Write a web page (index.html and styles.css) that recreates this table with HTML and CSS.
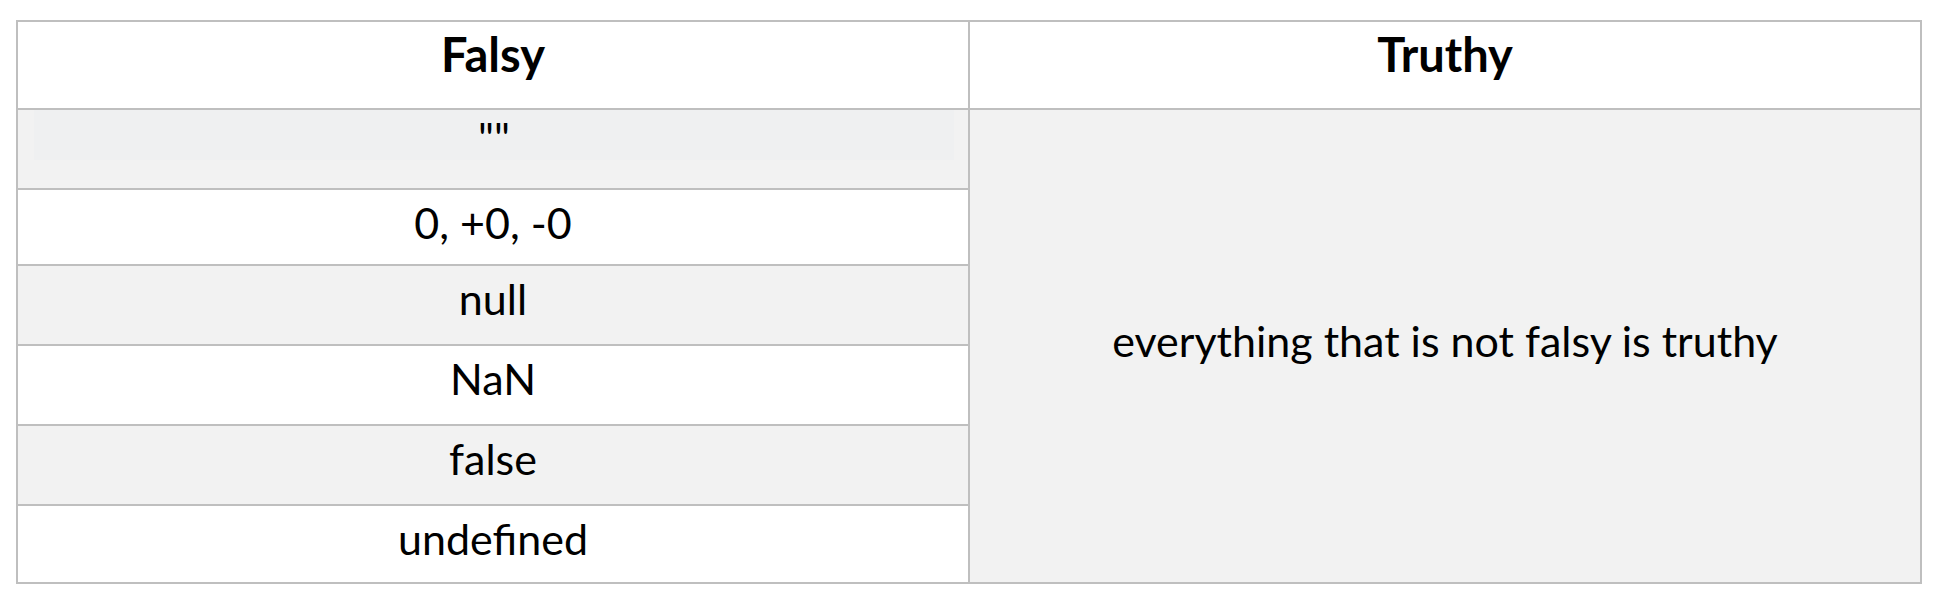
FILE: index.html
```html
<!DOCTYPE html>
<html>
<head>
<meta charset="utf-8">
<link rel="stylesheet" href="styles.css">
</head>
<body>
<table class="grid">
  <tr class="head">
    <th>Falsy</th>
    <th>Truthy</th>
  </tr>
  <tr class="row r80 shade">
    <td class="first"><div class="para">""</div></td>
    <td class="truthy" rowspan="6">everything that is not falsy is truthy</td>
  </tr>
  <tr class="row r76">
    <td>0, +0, -0</td>
  </tr>
  <tr class="row r80 shade">
    <td>null</td>
  </tr>
  <tr class="row r80">
    <td>NaN</td>
  </tr>
  <tr class="row r80 shade">
    <td>false</td>
  </tr>
  <tr class="row r78">
    <td>undefined</td>
  </tr>
</table>
</body>
</html>
```
FILE: styles.css
```css
html, body {
  margin: 0;
  padding: 0;
  background: #ffffff;
}
body {
  font-family: Lato, "Open Sans", sans-serif;
  color: #000000;
}
.grid {
  margin: 20px 0 0 16px;
  width: 1906px;
  border-collapse: collapse;
  table-layout: fixed;
}
.grid th,
.grid td {
  border: 2px solid #bfbfbf;
  width: 50%;
  padding: 0;
  text-align: center;
  vertical-align: top;
}
.grid th {
  font-weight: 700;
  font-size: 47px;
  line-height: 56px;
  padding-top: 4px;
  background: #ffffff;
}
.head { height: 88px; }
.r80 { height: 80px; }
.r76 { height: 76px; }
.r78 { height: 78px; }
.row td {
  font-size: 43px;
  line-height: 52px;
  padding-top: 7px;
  background: #ffffff;
}
.row.shade td {
  background: #f2f2f2;
}
.row td.first {
  padding-top: 0;
}
.para {
  background: #eff0f1;
  margin: 0 14px 0 16px;
  height: 45px;
  padding-top: 5px;
  line-height: 46px;
}
.grid td.truthy {
  background: #f2f2f2;
  vertical-align: middle;
  padding-top: 0;
  padding-bottom: 10px;
}
```
